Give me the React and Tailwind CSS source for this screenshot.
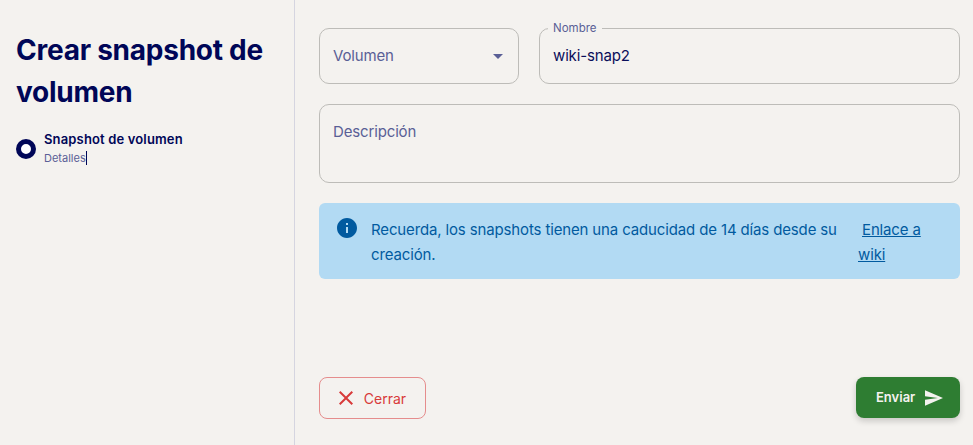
function Field({ label, value, className }) {
    return (
        <div className={`relative rounded-[10px] border border-[#bdbcb8] px-[13px] ${className}`}>
            <span className="absolute top-[-8px] left-[8px] bg-[#f4f2ef] px-[5px] text-[11.5px] leading-[15px] text-[#5a5f96]">{label}</span>
            <span className="text-[15px] leading-[54px] tracking-[-0.15px] text-[#0a0e5a]">{value}</span>
        </div>
    );
}

export default function App() {
    return (
        <div className="flex h-[445px] w-[973px] overflow-hidden bg-[#f4f2ef] font-['Inter',sans-serif]">
            <aside className="w-[295px] shrink-0 border-r border-[#d5d5e0] pt-[29px] pl-4">
                <h1 className="text-[28px] leading-[42px] font-bold tracking-[-0.25px] text-[#000657]">Crear snapshot de volumen</h1>
                <div className="mt-[18px] flex items-center gap-2">
                    <div className="mt-[2px] h-5 w-5 rounded-full border-[5px] border-[#000657] bg-white" />
                    <div>
                        <div className="text-[13px] leading-[16px] font-semibold tracking-[0.15px] text-[#000657]">Snapshot de volumen</div>
                        <div className="mt-[4px] w-fit border-r border-[#000657] text-[11px] leading-[14px] text-[#5a5f96]">Detalles</div>
                    </div>
                </div>
            </aside>

            <main className="flex flex-1 flex-col pt-[28px] pr-[13px] pb-[26px] pl-[24px]">
                <div className="flex gap-5">
                    <div className="flex h-14 w-[200px] items-center justify-between rounded-[10px] border border-[#bdbcb8] pr-[15px] pl-[13px]">
                        <span className="text-[15px] tracking-[-0.15px] text-[#5a5f96]">Volumen</span>
                        <div className="h-0 w-0 border-x-[5px] border-t-[5px] border-x-transparent border-t-[#5a5f96]" />
                    </div>
                    <Field label="Nombre" value="wiki-snap2" className="h-14 flex-1" />
                </div>

                <div className="mt-5 h-[79px] rounded-[10px] border border-[#bdbcb8] px-[13px] pt-[15px]">
                    <span className="block text-[15px] leading-[24px] tracking-[-0.15px] text-[#5a5f96]">Descripción</span>
                </div>

                <div className="mt-5 flex h-[76px] rounded-[6px] bg-[#b2daf3] pt-[14px] pl-[18px] text-[15px] leading-[25px] tracking-[-0.14px] text-[#015a9f]">
                    <svg viewBox="2 2 20 20" className="mt-[1px] h-5 w-5 shrink-0 fill-[#015a9f]">
                        <path d="M12 2C6.48 2 2 6.48 2 12s4.48 10 10 10 10-4.48 10-10S17.52 2 12 2zm1 15h-2v-6h2v6zm0-8h-2V7h2v2z" />
                    </svg>
                    <p className="ml-[14px] w-[487px] shrink-0">Recuerda, los snapshots tienen una caducidad de 14 días desde su creación.</p>
                    <div className="w-[75px] indent-[4px] underline">Enlace a wiki</div>
                </div>

                <div className="mt-auto flex items-start justify-between">
                    <button className="flex h-[42px] w-[107px] items-center justify-center gap-[11px] rounded-[8px] border border-[#e58d8d] text-[14px] text-[#d83a3a]">
                        <svg viewBox="5 5 14 14" className="h-[14px] w-[14px] fill-[#d83a3a]">
                            <path d="M19 6.41L17.59 5 12 10.59 6.41 5 5 6.41 10.59 12 5 17.59 6.41 19 12 13.41 17.59 19 19 17.59 13.41 12z" />
                        </svg>
                        Cerrar
                    </button>
                    <button className="flex h-[41px] w-[104px] items-center gap-[10px] rounded-[8px] bg-[#2e7d32] pl-[20px] text-[13px] font-semibold text-[#f4f2ef] shadow-[0_3px_6px_rgba(0,0,0,0.18)]">
                        Enviar
                        <svg viewBox="2 3 21 18" className="h-[16px] w-[18px] fill-[#f4f2ef]">
                            <path d="M2.01 21L23 12 2.01 3 2 10l15 2-15 2z" />
                        </svg>
                    </button>
                </div>
            </main>
        </div>
    );
}
